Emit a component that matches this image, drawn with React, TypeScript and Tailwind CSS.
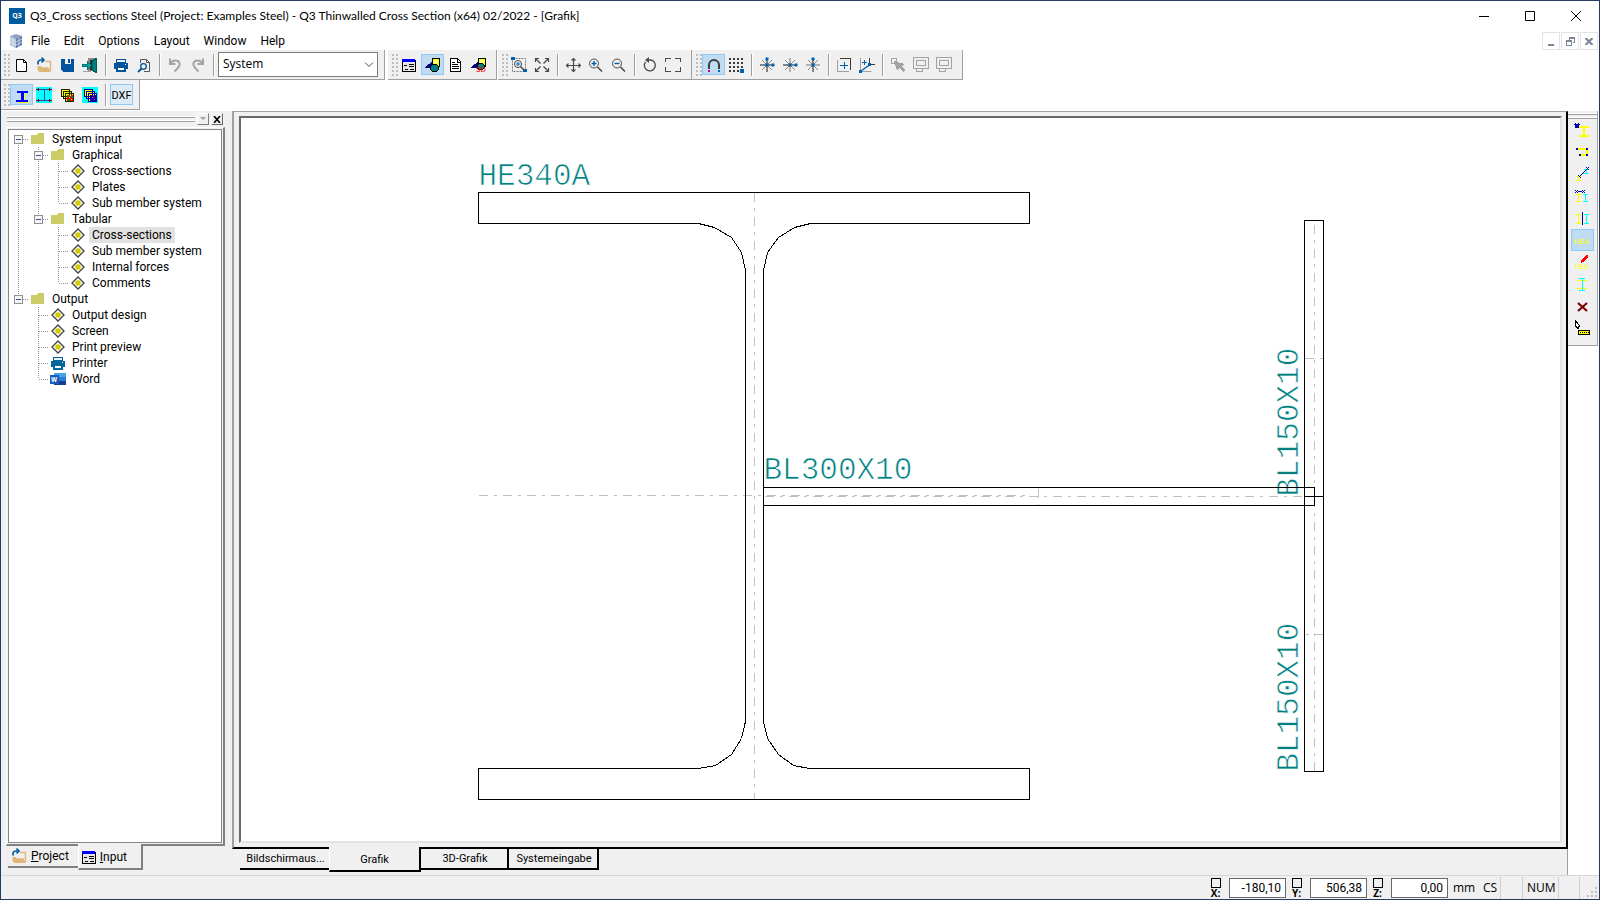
import React from 'react';

type IconProps = { children: React.ReactNode; size?: number };

const Icon: React.FC<IconProps> = ({ children, size = 16 }) => (
  <svg
    width={size}
    height={size}
    viewBox={`0 0 ${size} ${size}`}
    fill="none"
    shapeRendering="crispEdges"
    aria-hidden="true"
    className="shrink-0"
  >
    {children}
  </svg>
);

const SmoothIcon: React.FC<IconProps> = ({ children, size = 16 }) => (
  <svg
    width={size}
    height={size}
    viewBox={`0 0 ${size} ${size}`}
    fill="none"
    aria-hidden="true"
    className="shrink-0"
  >
    {children}
  </svg>
);

/* ---------- toolbar icons ---------- */

const NewIcon = () => (
  <SmoothIcon>
    <path d="M3.5 2.5h7l3 3v9h-10z" fill="#fff" stroke="#000" />
    <path d="M10.5 2.5v3h3" stroke="#000" />
  </SmoothIcon>
);

const OpenIcon = () => (
  <SmoothIcon>
    <path d="M9 4.5h5.5V14" stroke="#ddb67c" strokeWidth="1.4" />
    <path d="M1.5 9h3.2l1 1.3h6.8L14.5 15H3.5L1.5 13z" fill="#e0b676" />
    <path d="M2.5 7.5C1 5.5 2.5 3 5 3h2" stroke="#00539c" strokeWidth="1.6" />
    <path d="M5.5 0.5 8 3 5.5 5.5" stroke="#00539c" strokeWidth="1.5" />
  </SmoothIcon>
);

const SaveIcon = () => (
  <Icon>
    <path d="M2 2h13v13H4l-2-2z" fill="#00539c" />
    <path d="M6 2h6v5H6z" fill="#f0f0f0" />
    <path d="M9 2h2v4H9z" fill="#00539c" />
  </Icon>
);

const ExitIcon = () => (
  <Icon>
    <path d="M6 1h9v13H6z" fill="#8b8b8b" />
    <path d="M8 3h4v10H8z" fill="#303030" />
    <path d="M10.5 3.5l4-2v14l-4-2z" fill="#008080" stroke="#005a5a" />
    <path d="M.5 7.5h5v-3l4 4-4 4v-3h-5z" fill="#00a8a8" stroke="#007070" />
    <path d="M1 14h8v1H1z" fill="#a0a0a0" />
  </Icon>
);

const PrinterIcon = ({ color = '#00539c' }: { color?: string }) => (
  <Icon>
    <path d="M3.5 2.5h9v3h-9z" fill="#f0f0f0" stroke={color} />
    <path d="M1 6h14v6H1z" fill={color} />
    <path d="M4 10h8v4H4z" fill="#fff" stroke={color} strokeWidth="2" />
    <path d="M12 7h1v1h-1z" fill="#fff" />
  </Icon>
);

const PreviewIcon = () => (
  <SmoothIcon>
    <path d="M4.5 6V2.5h6l3 3v9H8" stroke="#555" />
    <path d="M10.5 2.5v3h3" stroke="#555" />
    <circle cx="7.5" cy="9.5" r="2.8" stroke="#00539c" strokeWidth="1.3" />
    <path d="M5.5 11.5 2 15" stroke="#00539c" strokeWidth="1.8" />
  </SmoothIcon>
);

const UndoIcon = () => (
  <SmoothIcon>
    <path d="M4 5.5C7 2.5 13.5 3 12.5 8c-.6 2.6-3 4.5-5 6.5" stroke="#a3a3a3" strokeWidth="2" />
    <path d="M3 1.5V7h5.5" stroke="#a3a3a3" strokeWidth="2" />
  </SmoothIcon>
);

const RedoIcon = () => (
  <SmoothIcon>
    <path d="M12 5.5C9 2.5 2.5 3 3.5 8c.6 2.6 3 4.5 5 6.5" stroke="#a3a3a3" strokeWidth="2" />
    <path d="M13 1.5V7H7.5" stroke="#a3a3a3" strokeWidth="2" />
  </SmoothIcon>
);

const FormIcon = () => (
  <Icon>
    <path d="M1 3h14v12H1z" fill="#000" />
    <path d="M2 5h12v9H2z" fill="#e8e8e8" />
    <path d="M1 2h13v3H1z" fill="#0000ff" />
    <path d="M3 8.5h3M8 7.5h5M8 9.5h5M4 12.5h3M9 12.5h4" stroke="#000" />
  </Icon>
);

const ShapesIcon = ({ three }: { three?: boolean }) => (
  <Icon>
    <path d="M8.5 1.5h7v8h-7z" fill="#ffff00" stroke="#000" />
    <path d="M10 3h1v1h-1zM12 3h1v1h-1zM11 4h1v1h-1zM13 4h1v1h-1zM10 5h1v1h-1zM12 5h1v1h-1zM11 6h1v1h-1z" fill="#fff" />
    <path d="M0 11h9V4z" fill="#000080" />
    <path d={three ? 'M8.5 6.5h4l2 2v2l-2 2h-4l-1-2v-2z' : 'M8.5 7.5h4l2 2v3l-2 2h-4l-2-2v-3z'} fill="#008080" stroke="#000" />
    {three && (
      <text x="6" y="15" fill="#ff0000" fontSize="8" fontFamily="Roboto, sans-serif">
        3D
      </text>
    )}
  </Icon>
);

const ReportIcon = () => (
  <Icon>
    <path d="M3.5 1.5h7l3 3v10h-10z" fill="#fff" stroke="#000" />
    <path d="M10 1v4h4M5 5.5h3M5 7.5h6M5 9.5h7M5 11.5h7" stroke="#000" />
    <path d="M3 14h11v1H3z" fill="#000" />
  </Icon>
);

const ZoomWindowIcon = () => (
  <SmoothIcon>
    <path d="M1.5 1.5h13v13h-13z" stroke="#7a7a7a" strokeDasharray="2 1" />
    <path d="M0 0h4v3H0zM12 12h4v3h-4z" fill="#0060ae" />
    <circle cx="7" cy="7" r="3.5" fill="#f0f0f0" stroke="#4a4a4a" />
    <path d="M7 5v4M5 7h4" stroke="#0060ae" />
    <path d="M9.5 9.5l3 3" stroke="#4a4a4a" strokeWidth="1.5" />
  </SmoothIcon>
);

const ZoomAllIcon = () => (
  <SmoothIcon>
    <path d="M1.5 5V1.5H5M11 1.5h3.5V5M14.5 11v3.5H11M5 14.5H1.5V11" stroke="#4a4a4a" strokeWidth="1.2" />
    <path d="M2 2l4.5 4.5M14 2 9.5 6.5M2 14l4.5-4.5M14 14 9.5 9.5" stroke="#4a4a4a" strokeWidth="1.3" />
  </SmoothIcon>
);

const PanIcon = () => (
  <SmoothIcon>
    <path d="M8.5 1.5v13M1.5 8.5h14" stroke="#4a4a4a" strokeWidth="1.2" />
    <path
      d="M6.5 3.5l2-2 2 2M6.5 12.500l2 2 2-2M3.5 6.5l-2 2 2 2M13.5 6.5l2 2-2 2"
      stroke="#4a4a4a"
      strokeWidth="1.2"
    />
  </SmoothIcon>
);

const ZoomIcon = ({ plus }: { plus?: boolean }) => (
  <SmoothIcon>
    <circle cx="6" cy="6.5" r="4.5" stroke="#4a4a4a" />
    <path d="M9.5 10l4.5 4.5" stroke="#4a4a4a" strokeWidth="1.6" />
    <path d={plus ? 'M6 4v5M3.5 6.5h5' : 'M3.5 6.5h5'} stroke="#0060ae" strokeWidth="1.4" />
  </SmoothIcon>
);

const RotateIcon = () => (
  <SmoothIcon>
    <path d="M3.5 5A5.5 5.5 0 1 0 9 3H5" stroke="#4a4a4a" strokeWidth="1.3" />
    <path d="M7 0v6L3 3z" fill="#4a4a4a" />
  </SmoothIcon>
);

const FrameIcon = () => (
  <Icon>
    <path d="M.5 5V1.5H6M10 1.5h5.5V5M15.5 10v4.5H10M6 14.5H.5V10" stroke="#4a4a4a" />
  </Icon>
);

const MagnetIcon = () => (
  <SmoothIcon>
    <path d="M4 12V8a5 5 0 0 1 10 0v4" stroke="#3c3c3c" strokeWidth="2" />
    <path d="M3 13h2v2H3z" fill="#d4006a" />
    <path d="M13 13h2v2h-2z" fill="#0060ae" />
  </SmoothIcon>
);

const GridIcon = () => (
  <Icon>
    {[1, 5, 9, 13].map((y) =>
      [1, 5, 9, 13].map((x) => <rect key={`${x}-${y}`} x={x} y={y} width="2" height="2" fill="#3c3c3c" />),
    )}
    <path d="M12 12h4v4h-4z" fill="#0060ae" />
  </Icon>
);

type StarProps = { dark: 'both' | 'h' | 'v' };

const StarIcon: React.FC<StarProps> = ({ dark }) => (
  <SmoothIcon>
    <path d="M3 3l10 10M13 3 3 13" stroke="#8a8a8a" />
    <path d="M8 1v14" stroke={dark === 'h' ? '#8a8a8a' : '#3c3c3c'} strokeWidth="1.2" />
    <path d="M1 8h14" stroke={dark === 'v' ? '#8a8a8a' : '#3c3c3c'} strokeWidth="1.2" />
    <path d="M6.5 6.5h3v3h-3z" fill="#0060ae" />
    {dark !== 'h' && <path d="M6.5 0.5h3v3h-3z" fill="#0060ae" />}
    {dark !== 'v' && <path d="M12.5 6.5h3v3h-3z" fill="#0060ae" />}
  </SmoothIcon>
);

const AddPointIcon = () => (
  <Icon>
    <path d="M1.5 3v12M1 14.5h12" stroke="#a0a0a0" />
    <path d="M4 1.5h11M14.5 1v12" stroke="#3c3c3c" />
    <path d="M4 8.5h8M8.5 5v7" stroke="#0060ae" />
  </Icon>
);

const AddVectorIcon = () => (
  <SmoothIcon>
    <path d="M1.5 1v13.5h11" stroke="#a0a0a0" />
    <path d="M10.5 1v6.5H16" stroke="#3c3c3c" />
    <path d="M2 14 11 7.5" stroke="#0060ae" strokeWidth="1.4" />
    <path d="M0 13h3v3H0zM9 6h3v3H9z" fill="#0060ae" />
    <path d="M5.5 3v5M3 5.5h5" stroke="#0060ae" />
  </SmoothIcon>
);

const PickIcon = () => (
  <Icon>
    <path d="M1.5 1.5h5v5h-5z" stroke="#a3a3a3" />
    <path d="M4 4l11 3-3 2 3 4-2 2-4-4-2 3z" fill="#a3a3a3" />
  </Icon>
);

const BoxIcon = () => (
  <Icon>
    <path d="M.5 .5h15v11h-15z" stroke="#a3a3a3" />
    <path d="M3.5 3.5h9v5h-9zM3.5 14.5v-3h6v3z" stroke="#a3a3a3" />
  </Icon>
);

const BeamIcon = () => (
  <Icon>
    <path d="M5 14h11v2H5zM11 6h1v7h-1z" fill="#ffff00" />
    <path d="M4 4h11v2H4zM8 6h3v7H8zM3 13h12v2H3z" fill="#0000ff" />
  </Icon>
);

const BeamDimIcon = () => (
  <Icon>
    <path d="M0 0h16v16H0z" fill="#00ffff" />
    <path d="M3 2.5h11M3 13.5h11M8.5 3v10" stroke="#4040a0" />
    <path d="M0 2.5h3M13 2.5h3M0 13.5h3M13 13.5h3M2.5 1v3M13.5 1v3M2.5 12v3M13.5 12v3" stroke="#800000" />
  </Icon>
);

const LayersIcon = ({ bg }: { bg?: boolean }) => (
  <Icon>
    {bg && <path d="M0 0h16v16H0z" fill="#00ffff" />}
    <path
      d="M2.5 2.5h8v7h-8zM4.5 4.5h8v7h-8zM6.5 6.5h8v8h-8z"
      fill="#ffff00"
      stroke={bg ? '#0000a0' : '#202000'}
    />
    <path d="M8 8h6v6H8z" fill={bg ? '#0000c0' : '#ff0000'} />
    <path d="M8 8h2v2H8zM12 9h2v2h-2zM9 12h2v2H9z" fill={bg ? '#400060' : '#008040'} />
    <path d="M10 10h1v1h-1zM12 12h1v1h-1zM11 8h1v1h-1z" fill={bg ? '#ff00a0' : '#ffff00'} />
  </Icon>
);

/* ---------- right tool strip icons ---------- */

const SectionName = ({ x, y, size }: { x: number; y: number; size: number }) => (
  <text x={x} y={y} fill="#ffff00" fontSize={size} fontFamily="Roboto, sans-serif">
    HEA
  </text>
);

const sideTools = [
  {
    label: 'Insert cross-section',
    icon: (
      <Icon>
        <path d="M5 4h10v2h-4v7h4v2H5v-2h4V6H5z" fill="#ffff00" />
        <path d="M1 2l4 4M5 2 1 6" stroke="#0000b0" strokeWidth="1.5" />
      </Icon>
    ),
  },
  {
    label: 'Plate polygon',
    icon: (
      <Icon>
        <path d="M3 5h10v6H6" stroke="#ffff00" strokeWidth="2" />
        <path d="M2 4h2v2H2zM12 4h2v2h-2zM5 10h2v2H5zM12 10h2v2h-2z" fill="#0000b0" />
      </Icon>
    ),
  },
  {
    label: 'Move cross-section',
    icon: (
      <Icon>
        <path d="M2 10.5h5M4.5 10v5M2 14.5h5" stroke="#ffff00" />
        <path d="M10 3.5h5M12.5 3v5M9 7.5h5" stroke="#00ffff" />
        <path d="M5 11 13 3M12 1l3 3M12 4l3-3M4 9l3 3" stroke="#0000c0" />
      </Icon>
    ),
  },
  {
    label: 'Copy cross-section',
    icon: (
      <Icon>
        <path d="M2 6.5h5M4.5 6v7M2 13.5h5" stroke="#ffff00" />
        <path d="M9 6.5h5M11.5 6v7M9 13.5h5" stroke="#00ffff" />
        <path d="M1 5l3-3M1 2l3 3M8 2l3 3M8 5l3-3M4 3.5h4" stroke="#0000c0" />
      </Icon>
    ),
  },
  {
    label: 'Mirror cross-section',
    icon: (
      <Icon>
        <path d="M2 4.5h5M4.5 4v9M2 13.5h5" stroke="#ffff00" />
        <path d="M10 4.5h5M12.5 4v9M10 13.5h5" stroke="#00ffff" />
        <path d="M8.5 2v13" stroke="#0000a0" />
      </Icon>
    ),
  },
  {
    label: 'Section names',
    active: true,
    icon: (
      <Icon>
        <SectionName x={0} y={12} size={8} />
      </Icon>
    ),
  },
  {
    label: 'Edit section name',
    icon: (
      <Icon>
        <path d="M7 8V6l3-3 2-2h2v2l-3 4-4 2z" fill="#ff0000" />
        <SectionName x={1} y={15} size={7} />
      </Icon>
    ),
  },
  {
    label: 'Fit height',
    icon: (
      <Icon>
        <path d="M3 4.5h10M3 12.5h10" stroke="#ffff00" />
        <path d="M5 2.500h6M8.5 2v13M5 14.5h6" stroke="#00ffff" />
      </Icon>
    ),
  },
  {
    label: 'Delete',
    icon: (
      <SmoothIcon>
        <path d="M4 5l9 8M13 5l-9 8" stroke="#800000" strokeWidth="2.2" />
      </SmoothIcon>
    ),
  },
  {
    label: 'Measure',
    icon: (
      <Icon>
        <path d="M1.5 .5v6h1l1 2h1V6h1z" fill="#fff" stroke="#000" />
        <path d="M4.5 10.5h11v4h-11z" fill="#ffff00" stroke="#000" />
        <path d="M6 12.5h9" stroke="#000" strokeDasharray="1 1" />
      </Icon>
    ),
  },
];

/* ---------- toolbars ---------- */

type Tool = { label: string; icon: React.ReactNode; active?: boolean } | 'sep';

const mainTools: Tool[] = [
  { label: 'New', icon: <NewIcon /> },
  { label: 'Open', icon: <OpenIcon /> },
  { label: 'Save', icon: <SaveIcon /> },
  { label: 'Exit', icon: <ExitIcon /> },
  'sep',
  { label: 'Print', icon: <PrinterIcon /> },
  { label: 'Print preview', icon: <PreviewIcon /> },
  'sep',
  { label: 'Undo', icon: <UndoIcon /> },
  { label: 'Redo', icon: <RedoIcon /> },
  'sep',
];

const viewTools: Tool[] = [
  { label: 'Input form', icon: <FormIcon /> },
  { label: 'Graphic', icon: <ShapesIcon />, active: true },
  { label: 'Report', icon: <ReportIcon /> },
  { label: '3D graphic', icon: <ShapesIcon three /> },
];

const zoomTools: Tool[] = [
  { label: 'Zoom window', icon: <ZoomWindowIcon /> },
  { label: 'Zoom all', icon: <ZoomAllIcon /> },
  'sep',
  { label: 'Pan', icon: <PanIcon /> },
  { label: 'Zoom in', icon: <ZoomIcon plus /> },
  { label: 'Zoom out', icon: <ZoomIcon /> },
  'sep',
  { label: 'Rotate', icon: <RotateIcon /> },
  { label: 'Full frame', icon: <FrameIcon /> },
];

const snapTools: Tool[] = [
  { label: 'Snap', icon: <MagnetIcon />, active: true },
  { label: 'Grid', icon: <GridIcon /> },
  'sep',
  { label: 'Free direction', icon: <StarIcon dark="both" /> },
  { label: 'Horizontal', icon: <StarIcon dark="h" /> },
  { label: 'Vertical', icon: <StarIcon dark="v" /> },
  'sep',
  { label: 'Absolute point', icon: <AddPointIcon /> },
  { label: 'Relative point', icon: <AddVectorIcon /> },
  'sep',
  { label: 'Pick', icon: <PickIcon /> },
  { label: 'Select box', icon: <BoxIcon /> },
  { label: 'Deselect box', icon: <BoxIcon /> },
];

const sectionTools: Tool[] = [
  { label: 'Section', icon: <BeamIcon />, active: true },
  { label: 'Dimensions', icon: <BeamDimIcon /> },
  { label: 'Layers', icon: <LayersIcon /> },
  { label: 'Layer colours', icon: <LayersIcon bg /> },
  'sep',
];

const Grip = () => (
  <svg width="9" height="26" shapeRendering="crispEdges" aria-hidden="true" className="shrink-0">
    {[0, 1, 2, 3, 4, 5].map((i) => (
      <g key={i} fill="#bdbdbd">
        <rect x="3" y={2 + i * 4} width="2" height="2" />
        <rect x="7" y={2 + i * 4} width="2" height="2" />
      </g>
    ))}
  </svg>
);

const ToolItems: React.FC<{ tools: Tool[] }> = ({ tools }) => (
  <>
    {tools.map((tool, i) =>
      tool === 'sep' ? (
        <span key={i} className="mx-[3px] h-[22px] w-[2px] shrink-0 border-l border-[#a0a0a0] border-r border-r-white" />
      ) : (
        <button
          key={tool.label}
          type="button"
          aria-label={tool.label}
          className={
            tool.active
              ? 'flex h-[21px] w-[23px] shrink-0 items-center border border-[#90c8f6] bg-[#bfdcf3] pl-[2px]'
              : 'flex h-[21px] w-[23px] shrink-0 items-center pl-[3px]'
          }
        >
          {tool.icon}
        </button>
      ),
    )}
  </>
);

const ToolGroup: React.FC<{ children: React.ReactNode; className?: string }> = ({ children, className = '' }) => (
  <div
    className={`flex h-[30px] shrink-0 items-center border-b border-r border-[#a0a0a0] bg-[#f0f0f0] pr-[6px] ${className}`}
  >
    <Grip />
    {children}
  </div>
);

/* ---------- project tree ---------- */

type Guide = 'none' | 'line' | 'tee' | 'end' | 'open-first' | 'open-mid' | 'open-end';
type Row = { label: string; guides: Guide[]; icon: 'folder' | 'item' | 'printer' | 'word'; selected?: boolean };

const rows: Row[] = [
  { label: 'System input', guides: ['open-first'], icon: 'folder' },
  { label: 'Graphical', guides: ['line', 'open-mid'], icon: 'folder' },
  { label: 'Cross-sections', guides: ['line', 'line', 'tee'], icon: 'item' },
  { label: 'Plates', guides: ['line', 'line', 'tee'], icon: 'item' },
  { label: 'Sub member system', guides: ['line', 'line', 'end'], icon: 'item' },
  { label: 'Tabular', guides: ['line', 'open-end'], icon: 'folder' },
  { label: 'Cross-sections', guides: ['line', 'none', 'tee'], icon: 'item', selected: true },
  { label: 'Sub member system', guides: ['line', 'none', 'tee'], icon: 'item' },
  { label: 'Internal forces', guides: ['line', 'none', 'tee'], icon: 'item' },
  { label: 'Comments', guides: ['line', 'none', 'end'], icon: 'item' },
  { label: 'Output', guides: ['open-end'], icon: 'folder' },
  { label: 'Output design', guides: ['none', 'tee'], icon: 'item' },
  { label: 'Screen', guides: ['none', 'tee'], icon: 'item' },
  { label: 'Print preview', guides: ['none', 'tee'], icon: 'item' },
  { label: 'Printer', guides: ['none', 'tee'], icon: 'printer' },
  { label: 'Word', guides: ['none', 'end'], icon: 'word' },
];

const GuideCell: React.FC<{ kind: Guide }> = ({ kind }) => {
  const open = kind.startsWith('open');
  const down = kind === 'line' || kind === 'tee' || kind === 'open-first' || kind === 'open-mid';
  const up = kind !== 'none' && kind !== 'open-first';
  return (
    <svg width="20" height="16" shapeRendering="crispEdges" aria-hidden="true" className="shrink-0">
      <g stroke="#909090" strokeDasharray="1 1">
        {up && <path d="M9.5 0v8" />}
        {down && <path d="M9.5 8v8" />}
        {kind !== 'none' && kind !== 'line' && <path d="M10 8.5h10" />}
      </g>
      {open && (
        <>
          <rect x="5.5" y="4.5" width="8" height="8" fill="#f6f6f6" stroke="#909090" />
          <path d="M7 8.5h5" stroke="#3050a8" />
        </>
      )}
    </svg>
  );
};

const treeIcons = {
  folder: (
    <Icon>
      <path d="M1 4h6V3l1-1h6v11H1z" fill="#cccc66" />
    </Icon>
  ),
  item: (
    <SmoothIcon>
      <path d="M8 2 14 8 8 14 2 8z" fill="#fff" stroke="#404040" strokeWidth="1.3" />
      <circle cx="8" cy="8" r="2.8" fill="#cccc00" />
    </SmoothIcon>
  ),
  printer: <PrinterIcon color="#006699" />,
  word: (
    <Icon>
      <path d="M4 2h12v4H4z" fill="#41a5ee" />
      <path d="M4 6h12v4H4z" fill="#2b7cd3" />
      <path d="M4 10h12v4H4z" fill="#103f91" />
      <path d="M0 4h9v9H0z" fill="#185abd" />
      <text x="1" y="11" fill="#fff" fontSize="7" fontWeight="700" fontFamily="Roboto, sans-serif">
        W
      </text>
    </Icon>
  ),
};

const ProjectPanel = () => (
  <aside className="flex w-[231px] shrink-0 flex-col pl-[5px] pr-[7px]">
    <div className="flex h-[16px] shrink-0 items-center gap-[2px] pl-px pr-[2px]">
      <div className="flex flex-1 flex-col gap-[2px]">
        <span className="h-[2px] border-b border-[#a0a0a0] bg-white" />
        <span className="h-[2px] border-b border-[#a0a0a0] bg-white" />
      </div>
      <button
        type="button"
        aria-label="Panel menu"
        className="flex size-[12px] items-center justify-center border border-[#808080] border-l-white border-t-white"
      >
        <svg width="6" height="4" aria-hidden="true">
          <path d="M0 0h6L3 3z" fill="#a0a0a0" />
        </svg>
      </button>
      <button
        type="button"
        aria-label="Close panel"
        className="flex size-[12px] items-center justify-center border border-[#696969] border-l-white border-t-white"
      >
        <svg width="8" height="7" aria-hidden="true">
          <path d="M1 0l6 7M7 0 1 7" stroke="#000" strokeWidth="1.6" />
        </svg>
      </button>
    </div>
    <div className="flex min-h-0 flex-1 flex-col border-b-2 border-l border-r-2 border-t border-[#808080] border-l-white border-t-white p-px">
      <ul className="min-h-0 flex-1 overflow-hidden border border-[#828790] bg-white pt-px">
        {rows.map((row, i) => (
          <li key={i} className="flex h-[16px] items-center">
            {row.guides.map((guide, g) => (
              <GuideCell key={g} kind={guide} />
            ))}
            <span className="flex w-[20px] shrink-0 pl-px">{treeIcons[row.icon]}</span>
            <span
              className={
                row.selected
                  ? "bg-[#e2e2e2] px-[3px] font-['Roboto',sans-serif] text-[12px] leading-[16px]"
                  : "px-[3px] font-['Roboto',sans-serif] text-[12px] leading-[16px]"
              }
            >
              {row.label}
            </span>
          </li>
        ))}
      </ul>
    </div>
    <div className="flex h-[29px] shrink-0 items-start pl-[2px] font-['Roboto',sans-serif] text-[12px] leading-[16px]">
      <button
        type="button"
        className="flex h-[22px] items-center gap-[4px] border-b-2 border-[#808080] pl-[3px] pr-[9px]"
      >
        <OpenIcon />
        <span>
          <u>P</u>roject
        </span>
      </button>
      <button
        type="button"
        className="-mt-[2px] flex h-[26px] items-center gap-[3px] border-b-2 border-r-2 border-[#808080] border-l border-l-white bg-[#f0f0f0] pl-[2px] pr-[14px] pt-[2px]"
      >
        <FormIcon />
        <span>
          <u>I</u>nput
        </span>
      </button>
    </div>
  </aside>
);

/* ---------- drawing ---------- */

const labelProps = {
  fontFamily: '"Liberation Mono", monospace',
  fontSize: 31,
  fill: '#008080',
  stroke: '#ffffff',
  strokeWidth: 0.7,
};

const chain = { stroke: '#c0c0c0', strokeDasharray: '9 6 3 6' };

const Drawing = () => (
  <svg width="100%" height="100%" className="block" role="img" aria-label="Cross-section drawing">
    <g transform="translate(-240.5 -117.5)" fill="none">
      <g {...labelProps}>
        <text x="478" y="184">HE340A</text>
        <text x="763" y="478">BL300X10</text>
        <text transform="translate(1297 496) rotate(-90)">BL150X10</text>
        <text transform="translate(1297 771) rotate(-90)">BL150X10</text>
      </g>
      <g {...chain} shapeRendering="crispEdges">
        <path d="M754 192V799" />
        <path d="M478 495H1029" />
        <path d="M764 496H1304" />
        <path d="M1038 488V505" />
        <path d="M1314 224V496" />
        <path d="M1314 497V771" />
        <path d="M1304 358H1323" />
        <path d="M1323 634H1304" />
      </g>
      <g stroke="#000" shapeRendering="crispEdges">
        <path d="M478 192H1029V223H810L794 227 778 237 767 252 763 270V721L767 738 778 754 793 765 809 768H1029V799H478V768H698L715 765 731 754 741 738 745 721V270L741 252 731 237 714 227 698 223H478Z" />
        <path d="M763 487H1314V505H763" />
        <path d="M1304 220H1323V771H1304Z" />
        <path d="M1304 496H1323" />
      </g>
    </g>
  </svg>
);

/* ---------- status bar ---------- */

const coords = [
  { axis: 'X', value: '-180,10' },
  { axis: 'Y', value: '506,38' },
  { axis: 'Z', value: '0,00' },
];

const menu = ['File', 'Edit', 'Options', 'Layout', 'Window', 'Help'];

const mdiIcons = [
  { label: 'Minimize drawing', d: 'M5 11h6v2H5z' },
  { label: 'Restore drawing', d: 'M7 4h6v6h-2V9h1V6H8v1H7zM4 7h6v6H4zM5 9v3h4V9z' },
  { label: 'Close drawing', d: 'M4 5h2l2 2 2-2h2v1L9.5 8.5 12 11v1h-2L8 10l-2 2H4v-1l2.5-2.5L4 6z' },
];

const windowIcons = [
  { label: 'Minimize', d: 'M0 5.5h10' },
  { label: 'Maximize', d: 'M.5 .5h9v9h-9z' },
  { label: 'Close', d: 'M0 0l10 10M10 0 0 10' },
];

export default function App() {
  return (
    <div className="flex h-screen flex-col border border-[#243c64] bg-white font-['Open_Sans',sans-serif] text-[12px] leading-[16px] text-black">
      <header className="flex h-[29px] shrink-0 items-center pl-[8px]">
        <span className="mr-[5px] flex size-[16px] items-center justify-center bg-[#005a9e] text-[7px] font-bold leading-[8px] text-white">
          Q3
        </span>
        <h1 className="flex-1 truncate font-['Lato',sans-serif] text-[12px]">
          Q3_Cross sections Steel (Project: Examples Steel) - Q3 Thinwalled Cross Section (x64) 02/2022 - [Grafik]
        </h1>
        {windowIcons.map((item) => (
          <button key={item.label} type="button" aria-label={item.label} className="flex h-full w-[46px] items-center justify-center">
            <svg width="10" height="10" fill="none" stroke="#000" aria-hidden="true">
              <path d={item.d} />
            </svg>
          </button>
        ))}
      </header>

      <nav className="flex h-[20px] shrink-0 items-center pl-[7px] pt-[2px] font-['Roboto',sans-serif]">
        <SmoothIcon>
          <path d="M8 1l6 2v9l-6 3-6-3V3z" fill="#8fa3c4" />
          <path d="M2 3l6 3v9l-6-3z" fill="#b9c6dc" />
          <path d="M8 6l6-3v9l-6 3z" fill="#5f7aa8" />
          <path d="M2 6l6 3 6-3M2 9l6 3 6-3M5 4.5V14M11 4.5V14" stroke="#dfe6f0" strokeWidth=".8" />
        </SmoothIcon>
        {menu.map((item) => (
          <button key={item} type="button" className="px-[7px]">
            {item}
          </button>
        ))}
        <span className="ml-auto mr-px flex gap-px">
          {mdiIcons.map((item) => (
            <button
              key={item.label}
              type="button"
              aria-label={item.label}
              className="flex size-[18px] items-center justify-center border border-[#e3e3e3]"
            >
              <svg width="16" height="16" aria-hidden="true" className="shrink-0">
                <path d={item.d} fill="#7b8794" fillRule="evenodd" />
              </svg>
            </button>
          ))}
        </span>
      </nav>

      <div className="flex h-[30px] shrink-0">
        <ToolGroup className="mr-[3px]">
          <ToolItems tools={mainTools} />
          <div className="relative flex">
            <select
              aria-label="View"
              defaultValue="System"
              className="h-[25px] w-[160px] appearance-none rounded-none border border-[#7a7a7a] bg-white pl-[4px] pb-px text-[12px] leading-[18px]"
            >
              <option>System</option>
            </select>
            <svg width="10" height="6" fill="none" stroke="#505050" aria-hidden="true" className="absolute right-[4px] top-[10px]">
              <path d="M1 .5 5 4.5 9 .5" />
            </svg>
          </div>
        </ToolGroup>
        <ToolGroup className="mr-px pl-px">
          <ToolItems tools={viewTools} />
        </ToolGroup>
        <ToolGroup className="pl-px">
          <ToolItems tools={zoomTools} />
        </ToolGroup>
        <ToolGroup className="pl-px">
          <ToolItems tools={snapTools} />
        </ToolGroup>
      </div>

      <div className="flex h-[31px] shrink-0 items-start">
        <ToolGroup>
          <ToolItems tools={sectionTools} />
          <button
            type="button"
            className="h-[21px] w-[23px] border border-[#90c8f6] bg-[#dcebf7] font-['Roboto',sans-serif] text-[11px] leading-[21px]"
          >
            DXF
          </button>
        </ToolGroup>
      </div>

      <main className="flex min-h-0 flex-1 bg-[#f0f0f0]">
        <ProjectPanel />

        <section className="flex min-w-0 flex-1 flex-col">
          <div className="min-h-0 flex-1 border-b-2 border-l-2 border-r-2 border-t border-black border-l-[#a0a0a0] border-t-[#a0a0a0] pb-[4px] pl-[5px] pr-[4px] pt-[4px]">
            <div className="h-full overflow-hidden border-2 border-[#e3e3e3] border-l-[#696969] border-t-[#696969] bg-white">
              <Drawing />
            </div>
          </div>
          <div className="flex h-[26px] shrink-0 items-start border-r border-[#a0a0a0] pl-[8px] font-['Roboto',sans-serif] text-[11px] leading-[16px]">
            <button type="button" className="h-[21px] w-[89px] border-b-2 border-black pl-[2px] pt-px">
              Bildschirmaus...
            </button>
            <button
              type="button"
              className="-mt-[2px] h-[25px] w-[92px] border-b-2 border-r-2 border-black border-l border-l-white bg-[#f0f0f0] pt-[3px]"
            >
              Grafik
            </button>
            <button type="button" className="h-[21px] w-[88px] border-b-2 border-r-2 border-black pl-[2px] pt-px">
              3D-Grafik
            </button>
            <button type="button" className="h-[21px] w-[90px] border-b-2 border-r-2 border-black pl-[2px] pt-px">
              Systemeingabe
            </button>
          </div>
        </section>

        <div className="w-[31px] shrink-0 bg-white">
          <div className="flex w-[30px] flex-col items-center border-b border-r border-[#a0a0a0] bg-[#f0f0f0] pb-[6px]">
            <div className="flex w-full flex-col gap-[2px] pt-[2px]">
              <span className="h-[2px] border-b border-[#a0a0a0] bg-white" />
              <span className="h-[2px] border-b border-[#a0a0a0] bg-white" />
            </div>
            {sideTools.map((tool) => (
              <button
                key={tool.label}
                type="button"
                aria-label={tool.label}
                className={
                  tool.active
                    ? 'flex h-[22px] w-[23px] items-center border border-[#90c8f6] bg-[#bfdcf3] pl-[2px]'
                    : 'flex h-[22px] w-[23px] items-center pl-[3px]'
                }
              >
                {tool.icon}
              </button>
            ))}
          </div>
        </div>
      </main>

      <footer className="flex h-[24px] shrink-0 items-center justify-end border-t border-[#d7d7d7] bg-[#f0f0f0]">
        {coords.map((c) => (
          <label key={c.axis} className="flex items-center">
            <span className="mr-[8px] flex w-[11px] flex-col items-center text-[10px] font-bold leading-[8px]">
              <span className="mb-px size-[10px] border border-black" />
              {c.axis}:
            </span>
            <input
              defaultValue={c.value}
              className="mr-[5px] h-[20px] w-[57px] border border-[#696969] bg-white pr-[4px] text-right font-['Roboto',sans-serif] text-[12px] leading-[16px]"
            />
          </label>
        ))}
        <span className="w-[30px]">mm</span>
        <span className="h-[22px] w-[18px] border-r border-[#d0d0d0] leading-[22px]">CS</span>
        <span className="mr-[4px] h-[22px] w-[22px] border-r border-[#d0d0d0]" />
        <span className="h-[22px] w-[32px] border-r border-[#d0d0d0] leading-[22px]">NUM</span>
        <span className="h-[22px] w-[21px] border-r border-[#d0d0d0]" />
        <svg width="19" height="22" aria-hidden="true" shapeRendering="crispEdges">
          <path
            d="M15 10h2v2h-2zM15 14h2v2h-2zM11 14h2v2h-2zM15 18h2v2h-2zM11 18h2v2h-2zM7 18h2v2H7z"
            fill="#bfbfbf"
          />
        </svg>
      </footer>
    </div>
  );
}
